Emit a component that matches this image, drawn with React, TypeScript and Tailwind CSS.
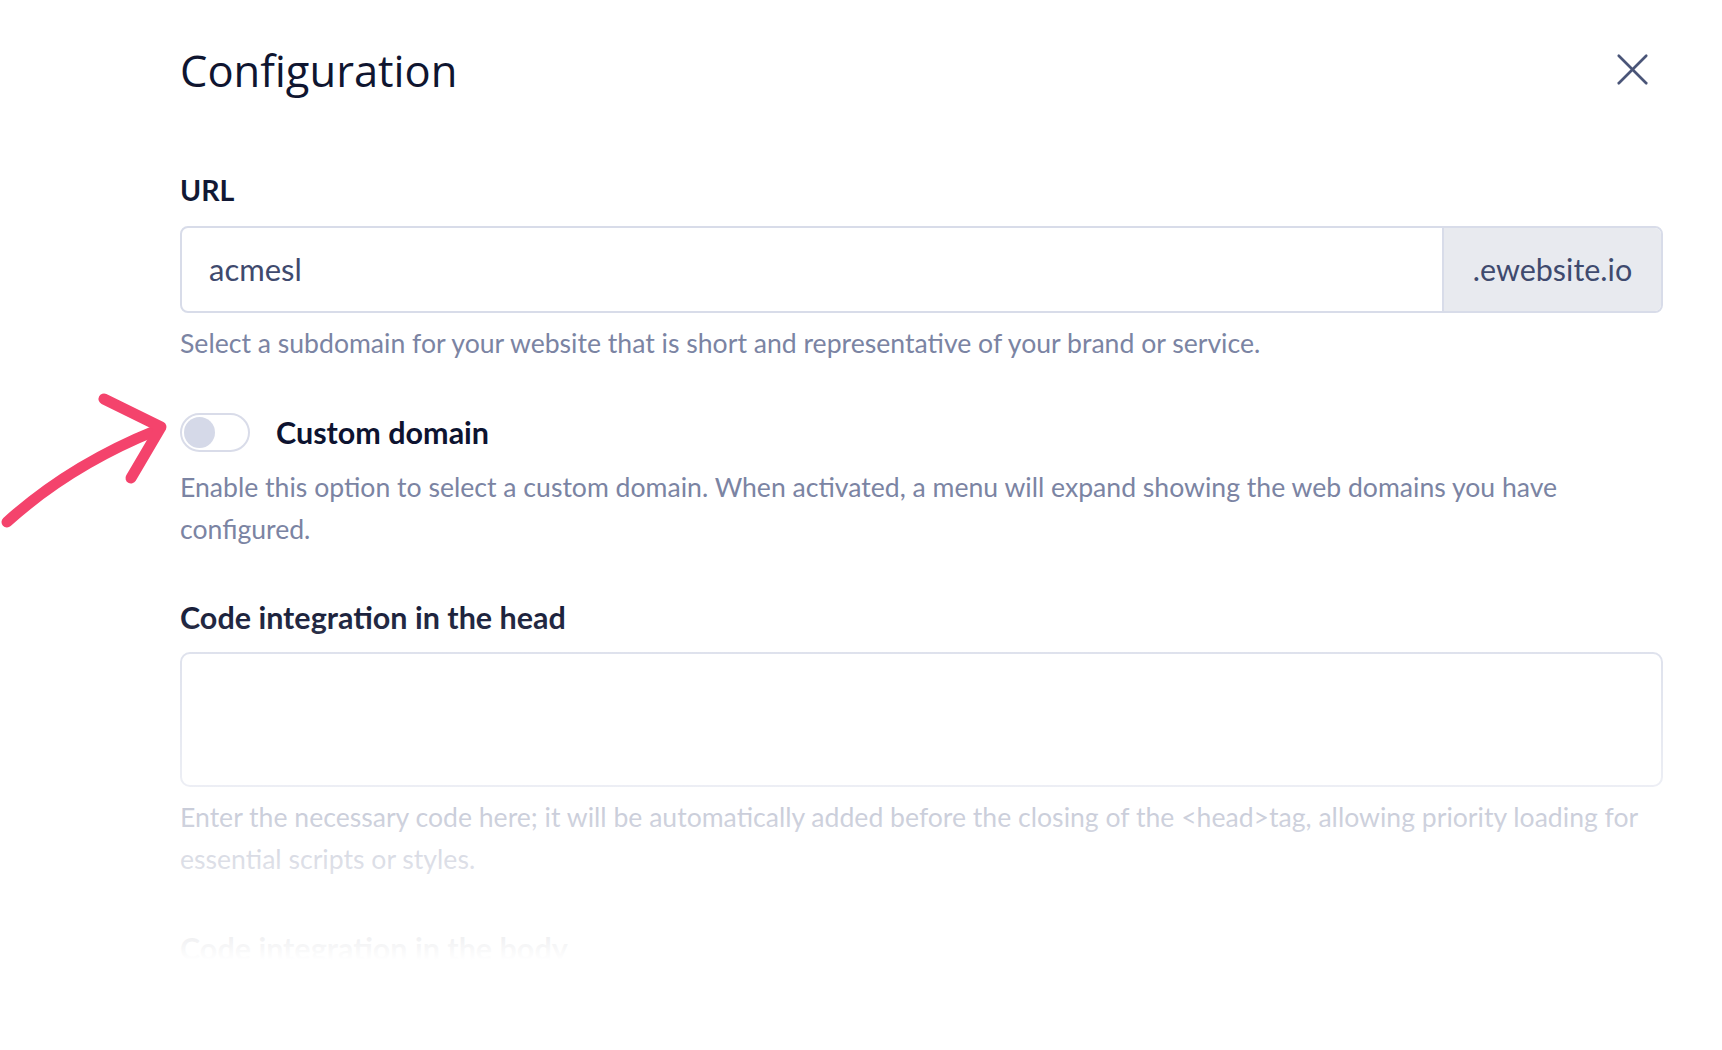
import { X } from "lucide-react";

const body = { fontFamily: "Lato, 'Noto Sans', sans-serif" };

function Toggle() {
  return (
    <div className="flex h-[39px] w-[70px] items-center rounded-full border-2 border-[#d9dce9] bg-white px-[2px]">
      <div className="h-[31px] w-[31px] rounded-full bg-[#d5d9e8]" />
    </div>
  );
}

function Arrow() {
  return (
    <svg
      className="absolute left-0 top-[380px]"
      width="200"
      height="160"
      viewBox="0 380 200 160"
      fill="none"
      stroke="#f4436c"
      strokeWidth="11"
      strokeLinecap="round"
      strokeLinejoin="round"
    >
      <path d="M7 522 Q70 465 157 430" />
      <path d="M104 399 L161 427 L131 478" />
    </svg>
  );
}

export default function App() {
  return (
    <div className="relative h-[1050px] w-full overflow-hidden bg-white" style={body}>
      <Arrow />

      <div className="pl-[180px] pr-[59px] pt-[43px]">
        <div className="flex items-start justify-between">
          <h1
            className="h-[56px] text-[43.5px] leading-[56px] text-[#0f1530]"
            style={{ fontFamily: "'Open Sans', sans-serif" }}
          >
            Configuration
          </h1>
          <button className="mr-[3px] -mt-[1px] text-[#4a5578]">
            <X size={55} strokeWidth={1.15} />
          </button>
        </div>

        <label className="mt-[75px] block text-[28.5px] font-bold leading-[32px] text-[#111834]">URL</label>

        <div className="mt-[20px] flex h-[87px] overflow-hidden rounded-[8px] border-2 border-[#d8dce9]">
          <div className="flex flex-1 items-center pl-[27px] text-[31px] text-[#3f4a6e]">acmesl</div>
          <div className="flex w-[219px] items-center justify-center border-l-2 border-[#d8dce9] bg-[#e8eaef] text-[30.5px] text-[#3f4a6e]">
            .ewebsite.io
          </div>
        </div>

        <p className="mt-[10px] text-[26.6px] leading-[40px] text-[#7b84a3]">
          Select a subdomain for your website that is short and representative of your brand or service.
        </p>

        <div className="mt-[47px] flex items-center gap-[26px]">
          <Toggle />
          <span className="text-[30.5px] font-bold text-[#0d1330]">Custom domain</span>
        </div>

        <p className="mt-[10px] max-w-[1420px] text-[26.6px] leading-[42px] text-[#7b84a3]">
          Enable this option to select a custom domain. When activated, a menu will expand showing the web
          domains you have configured.
        </p>

        <label className="mt-[49px] block text-[30.5px] font-bold leading-[36px] text-[#0d1330]">
          Code integration in the head
        </label>

        <div className="mt-[17px] h-[135px] rounded-[10px] border-2 border-[#d8dce9]" />

        <p className="mt-[9px] text-[26.6px] leading-[42px] text-[#7b84a3]">
          Enter the necessary code here; it will be automatically added before the closing of the &lt;head&gt;tag,
          allowing priority loading for essential scripts or styles.
        </p>

        <label className="mt-[50px] block text-[30.5px] font-bold leading-[36px] text-[#0d1330]">
          Code integration in the body
        </label>
      </div>

      {/* fade out towards the bottom */}
      <div className="absolute inset-x-0 top-[590px] h-[370px] bg-linear-to-b from-white/0 to-white" />
      <div className="absolute inset-x-0 top-[960px] bottom-0 bg-white" />
    </div>
  );
}
